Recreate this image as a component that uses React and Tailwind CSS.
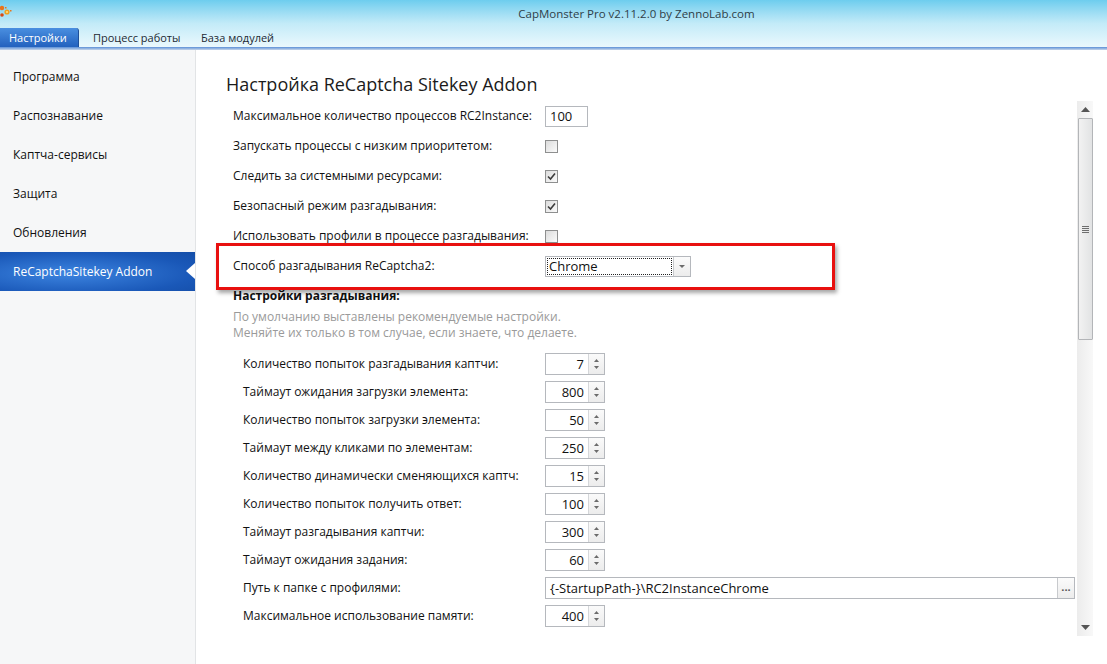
import React from 'react'

const font = { fontFamily: '"Open Sans", "Noto Sans", sans-serif' }

const topRows = [
  { label: 'Максимальное количество процессов RC2Instance:', type: 'text', value: '100' },
  { label: 'Запускать процессы с низким приоритетом:', type: 'check', value: false },
  { label: 'Следить за системными ресурсами:', type: 'check', value: true },
  { label: 'Безопасный режим разгадывания:', type: 'check', value: true },
  { label: 'Использовать профили в процессе разгадывания:', type: 'check', value: false },
]

const spinRows = [
  ['Количество попыток разгадывания каптчи:', '7'],
  ['Таймаут ожидания загрузки элемента:', '800'],
  ['Количество попыток загрузки элемента:', '50'],
  ['Таймаут между кликами по элементам:', '250'],
  ['Количество динамически сменяющихся каптч:', '15'],
  ['Количество попыток получить ответ:', '100'],
  ['Таймаут разгадывания каптчи:', '300'],
  ['Таймаут ожидания задания:', '60'],
  ['Путь к папке с профилями:', null],
  ['Максимальное использование памяти:', '400'],
]

const menu = ['Программа', 'Распознавание', 'Каптча-сервисы', 'Защита', 'Обновления', 'ReCaptchaSitekey Addon']

function Logo() {
  return (
    <svg width="12" height="14" viewBox="0 0 12 14" className="absolute left-0 top-[4px]">
      <circle cx="2" cy="4" r="2.2" fill="#e8741c" />
      <circle cx="7" cy="8" r="2.6" fill="#f0a020" />
      <circle cx="7" cy="8" r="1" fill="#fde68a" />
      <circle cx="2" cy="11" r="1.8" fill="#d84a14" />
      <rect x="5" y="3" width="1.5" height="1.5" fill="#e8741c" />
      <rect x="10" y="6" width="1.5" height="1.5" fill="#e8741c" />
    </svg>
  )
}

function Checkbox({ checked }) {
  return (
    <div className="w-[13px] h-[13px] border border-[#8e8f8f] bg-gradient-to-br from-[#dcdcdc] to-[#fbfbfb] flex items-center justify-center">
      {checked && (
        <svg width="9" height="9" viewBox="0 0 9 9">
          <path d="M1 4.5 L3.5 7 L8 1.5" stroke="#3c3c3c" strokeWidth="1.6" fill="none" />
        </svg>
      )}
    </div>
  )
}

function Spin({ value }) {
  return (
    <div className="flex w-[60px] h-[22px] border border-[#b5b8bd] bg-white">
      <div className="flex-1 text-right pr-[4px] leading-[20px] text-[13px] text-[#111]">{value}</div>
      <div className="w-[16px] border-l border-[#d5d7da] bg-gradient-to-b from-[#fafafa] to-[#ececec] flex flex-col items-center justify-center gap-[4px]">
        <svg width="5" height="3" viewBox="0 0 5 3"><path d="M0 3 L2.5 0 L5 3Z" fill="#6b6b6b" /></svg>
        <svg width="5" height="3" viewBox="0 0 5 3"><path d="M0 0 L2.5 3 L5 0Z" fill="#6b6b6b" /></svg>
      </div>
    </div>
  )
}

export default function App() {
  return (
    <div className="w-[1107px] h-[664px] bg-white flex flex-col overflow-hidden text-[#111]" style={font}>
      {/* title bar + tabs */}
      <div className="relative h-[47px] bg-gradient-to-b from-[#6dcdee] via-[#c3ebf8] to-[#eaf8fd]">
        <Logo />
        <div className="h-[28px] flex items-center justify-center pl-[166px] text-[11.5px] text-[#2e3e48]">
          CapMonster Pro v2.11.2.0 by ZennoLab.com
        </div>
        <div className="flex h-[19px] items-end text-[11px]">
          <div className="w-[79px] h-[19px] rounded-tr-[3px] bg-gradient-to-b from-[#4a8fe0] to-[#2361be] text-white pl-[9px] leading-[19px] border-r border-[#1f4f99]">
            Настройки
          </div>
          <div className="pl-[14px] w-[122px] leading-[19px] text-[#1e2a33]">Процесс работы</div>
          <div className="leading-[19px] text-[#1e2a33]">База модулей</div>
        </div>
      </div>
      <div className="h-[3px] bg-gradient-to-b from-[#5b8fd6] to-[#c7d6ea]" />

      <div className="flex flex-1 min-h-0">
        {/* sidebar */}
        <div className="w-[196px] bg-[#f6f7f8] border-r border-[#e2e4e6] pt-[7px] flex flex-col">
          {menu.map((m, i) => {
            const active = i === menu.length - 1
            return (
              <div
                key={m}
                className={
                  active
                    ? 'relative h-[39px] flex items-center pl-[13px] text-[12px] text-white bg-[radial-gradient(ellipse_at_35%_55%,#3c84e0_0%,#1a58b8_70%,#154ea8_100%)]'
                    : 'h-[39px] flex items-center pl-[13px] text-[12px] text-[#111]'
                }
              >
                {m}
                {active && (
                  <div className="absolute right-0 top-[11px] w-0 h-0 border-y-[8px] border-y-transparent border-r-[9px] border-r-white" />
                )}
              </div>
            )
          })}
        </div>

        {/* content */}
        <div className="flex-1 flex flex-col min-w-0">
          <div className="h-[51px] pl-[30px] pt-[21px] text-[18px] text-[#1b1b1b] leading-[26px]">
            Настройка ReCaptcha Sitekey Addon
          </div>
          <div className="flex h-[535px] pl-[20px]">
            <div className="relative flex-1 pl-[17px]">
              {topRows.map((r) => (
                <div key={r.label} className="h-[30px] flex items-center text-[12px]">
                  <div className="w-[312px]">{r.label}</div>
                  {r.type === 'text' ? (
                    <div className="w-[43px] h-[21px] border border-[#b5b8bd] pl-[4px] leading-[19px] text-[13px]">{r.value}</div>
                  ) : (
                    <Checkbox checked={r.value} />
                  )}
                </div>
              ))}
              <div className="h-[30px] flex items-center text-[12px]">
                <div className="w-[312px]">Способ разгадывания ReCaptcha2:</div>
                <div className="flex w-[146px] h-[21px] border border-[#b5b8bd]">
                  <div className="flex-1 m-[1px] border border-dotted border-[#222] leading-[15px] pl-[1px] text-[13px]">Chrome</div>
                  <div className="w-[17px] border-l border-[#c8cacd] bg-gradient-to-b from-[#fbfbfb] to-[#ececec] flex items-center justify-center">
                    <svg width="6" height="3" viewBox="0 0 6 3"><path d="M0 0 L3 3 L6 0Z" fill="#6b6b6b" /></svg>
                  </div>
                </div>
              </div>
              <div className="absolute left-[0px] top-[142px] w-[619px] h-[47px] border-[3px] border-[#e8100f] shadow-[2px_3px_4px_rgba(0,0,0,0.35)]" />

              <div className="h-[28px] pt-[2px] flex items-center text-[12px] font-bold">Настройки разгадывания:</div>
              <div className="text-[12px] text-[#9a9a9a] leading-[16px]">
                По умолчанию выставлены рекомендуемые настройки.
                <br />
                Меняйте их только в том случае, если знаете, что делаете.
              </div>
              <div className="pt-[9px] pl-[10px]">
                {spinRows.map(([label, v]) => (
                  <div key={label} className="h-[28px] flex items-center text-[12px]">
                    <div className="w-[302px] shrink-0">{label}</div>
                    {v === null ? (
                      <div className="flex flex-1 mr-[2px] h-[22px] border border-[#b5b8bd]">
                        <div className="flex-1 pl-[4px] leading-[20px] text-[13px]">{'{-StartupPath-}\\RC2InstanceChrome'}</div>
                        <div className="w-[17px] border-l border-[#c8cacd] bg-gradient-to-b from-[#fbfbfb] to-[#ececec] flex items-center justify-center text-[11px] font-bold text-[#555] leading-none pb-[3px]">
                          ...
                        </div>
                      </div>
                    ) : (
                      <Spin value={v} />
                    )}
                  </div>
                ))}
              </div>
            </div>

            {/* scrollbar */}
            <div className="w-[16px] bg-gradient-to-r from-[#ececec] to-[#f8f8f8] flex flex-col items-center">
              <div className="h-[17px] flex items-center justify-center">
                <svg width="9" height="5" viewBox="0 0 9 5"><path d="M0 5 L4.5 0 L9 5Z" fill="#555" /></svg>
              </div>
              <div className="w-[15px] h-[222px] border border-[#b3b5b8] rounded-[1px] bg-gradient-to-r from-[#f2f2f2] to-[#e2e3e4] flex items-center justify-center">
                <div className="flex flex-col gap-[1px]">
                  <div className="w-[7px] h-[1px] bg-[#6e6e6e]" />
                  <div className="w-[7px] h-[1px] bg-[#6e6e6e]" />
                  <div className="w-[7px] h-[1px] bg-[#6e6e6e]" />
                  <div className="w-[7px] h-[1px] bg-[#6e6e6e]" />
                </div>
              </div>
              <div className="flex-1" />
              <div className="h-[17px] flex items-center justify-center">
                <svg width="9" height="5" viewBox="0 0 9 5"><path d="M0 0 L4.5 5 L9 0Z" fill="#555" /></svg>
              </div>
            </div>
            <div className="w-[14px]" />
          </div>
        </div>
      </div>
    </div>
  )
}
